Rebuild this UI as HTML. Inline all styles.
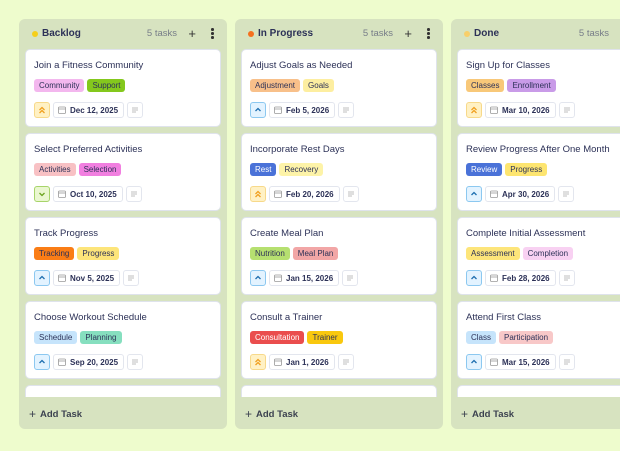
<!DOCTYPE html>
<html><head><meta charset="utf-8"><style>
*{box-sizing:border-box;margin:0;padding:0}
body{width:620px;height:451px;overflow:hidden;background:#eefccd;font-family:"Liberation Sans",sans-serif;color:#2c3157;position:relative}
.col{position:absolute;top:19px;width:208px;height:410px;background:#d7e3c0;border-radius:6px;overflow:hidden}
.hd{position:absolute;top:0;left:0;right:0;height:30px}
.dot{position:absolute;left:13px;top:12px;width:6px;height:6px;border-radius:50%}
.ht{position:absolute;left:23px;top:9px;font-size:10px;font-weight:bold}
.cnt{position:absolute;right:50px;top:9px;font-size:9.5px;color:#777d88}
.plus{position:absolute;right:31px;top:7px;font-size:13px;color:#333}
.more{position:absolute;right:13px;top:9px;width:3px}
.more i{display:block;width:2.5px;height:2.5px;background:#333;border-radius:50%;margin-bottom:1.5px}
.list{position:absolute;top:30px;left:6px;width:196px;height:348px;overflow:hidden}
.card{position:absolute;left:0;width:196px;height:78px;background:#fff;border-radius:5px;border:1px solid #dfe3ec}
.tt{position:absolute;left:8px;top:10px;font-size:9.5px;white-space:nowrap}
.tags{position:absolute;left:8px;top:29px;display:flex;gap:3px}
.tag{font-size:8px;height:13px;line-height:13px;padding:0 5px;border-radius:3px;color:#2c3157}
.ft{position:absolute;left:8px;top:52px;display:flex;gap:3px}
.pr{width:16px;height:16px;border-radius:3px;display:flex;align-items:center;justify-content:center}
.hi{background:#fff1c4;border:1px solid #f7d98a}
.lo{background:#e3f3ff;border:1px solid #8cc8f0}
.dn{background:#eaf7d0;border:1px solid #a7d46a}
.dt{height:16px;border:1px solid #e3e6ee;border-radius:3px;font-size:8px;font-weight:bold;display:flex;align-items:center;padding:0 5px 0 4px;gap:4px}
.nt{width:16px;height:16px;border:1px solid #e3e6ee;border-radius:3px;display:flex;align-items:center;justify-content:center}
.add{position:absolute;left:10px;top:387px;font-size:9.5px;font-weight:bold;color:#3c4250}
.add b{font-size:12px;font-weight:normal;margin-right:4px;position:relative;top:1px}
</style></head><body>

<div class="col" style="left:19px">
 <div class="hd"><div class="dot" style="background:#f5cf1a"></div><div class="ht">Backlog</div><div class="cnt">5 tasks</div><div class="plus">+</div><div class="more"><i></i><i></i><i></i></div></div>
 <div class="list">
  <div class="card" style="top:0">
   <div class="tt">Join a Fitness Community</div>
   <div class="tags"><span class="tag" style="background:#f3b7ee">Community</span><span class="tag" style="background:#84c81d">Support</span></div>
   <div class="ft"><div class="pr hi"><svg width="8" height="8" viewBox="0 0 8 8" fill="none" stroke="#f0a020" stroke-width="1.3"><path d="M1.5 4 4 1.5 6.5 4M1.5 7 4 4.5 6.5 7"/></svg></div><div class="dt"><svg width="8" height="8" viewBox="0 0 8 8" fill="none" stroke="#999" stroke-width=".8"><rect x=".5" y="1" width="7" height="6.5" rx="1"/><path d="M.5 3h7"/></svg>Dec 12, 2025</div><div class="nt"><svg width="8" height="6" viewBox="0 0 8 6" stroke="#aaa" stroke-width=".8"><path d="M1 1h6M1 3h6M1 5h4"/></svg></div></div>
  </div>
  <div class="card" style="top:84px">
   <div class="tt">Select Preferred Activities</div>
   <div class="tags"><span class="tag" style="background:#f8c1c4">Activities</span><span class="tag" style="background:#f17fe0">Selection</span></div>
   <div class="ft"><div class="pr dn"><svg width="8" height="8" viewBox="0 0 8 8" fill="none" stroke="#6aa31d" stroke-width="1.3"><path d="M1.5 3 4 5.5 6.5 3"/></svg></div><div class="dt"><svg width="8" height="8" viewBox="0 0 8 8" fill="none" stroke="#999" stroke-width=".8"><rect x=".5" y="1" width="7" height="6.5" rx="1"/><path d="M.5 3h7"/></svg>Oct 10, 2025</div><div class="nt"><svg width="8" height="6" viewBox="0 0 8 6" stroke="#aaa" stroke-width=".8"><path d="M1 1h6M1 3h6M1 5h4"/></svg></div></div>
  </div>
  <div class="card" style="top:168px">
   <div class="tt">Track Progress</div>
   <div class="tags"><span class="tag" style="background:#fa7d16">Tracking</span><span class="tag" style="background:#fde57a">Progress</span></div>
   <div class="ft"><div class="pr lo"><svg width="8" height="8" viewBox="0 0 8 8" fill="none" stroke="#1f6fb0" stroke-width="1.3"><path d="M1.5 5 4 2.5 6.5 5"/></svg></div><div class="dt"><svg width="8" height="8" viewBox="0 0 8 8" fill="none" stroke="#999" stroke-width=".8"><rect x=".5" y="1" width="7" height="6.5" rx="1"/><path d="M.5 3h7"/></svg>Nov 5, 2025</div><div class="nt"><svg width="8" height="6" viewBox="0 0 8 6" stroke="#aaa" stroke-width=".8"><path d="M1 1h6M1 3h6M1 5h4"/></svg></div></div>
  </div>
  <div class="card" style="top:252px">
   <div class="tt">Choose Workout Schedule</div>
   <div class="tags"><span class="tag" style="background:#c6e4fb">Schedule</span><span class="tag" style="background:#86dfbf">Planning</span></div>
   <div class="ft"><div class="pr lo"><svg width="8" height="8" viewBox="0 0 8 8" fill="none" stroke="#1f6fb0" stroke-width="1.3"><path d="M1.5 5 4 2.5 6.5 5"/></svg></div><div class="dt"><svg width="8" height="8" viewBox="0 0 8 8" fill="none" stroke="#999" stroke-width=".8"><rect x=".5" y="1" width="7" height="6.5" rx="1"/><path d="M.5 3h7"/></svg>Sep 20, 2025</div><div class="nt"><svg width="8" height="6" viewBox="0 0 8 6" stroke="#aaa" stroke-width=".8"><path d="M1 1h6M1 3h6M1 5h4"/></svg></div></div>
  </div>
  <div class="card" style="top:336px"></div>
 </div>
 <div class="add"><b>+</b>Add Task</div>
</div>

<div class="col" style="left:235px">
 <div class="hd"><div class="dot" style="background:#f5701e"></div><div class="ht">In Progress</div><div class="cnt">5 tasks</div><div class="plus">+</div><div class="more"><i></i><i></i><i></i></div></div>
 <div class="list">
  <div class="card" style="top:0">
   <div class="tt">Adjust Goals as Needed</div>
   <div class="tags"><span class="tag" style="background:#f8c08a">Adjustment</span><span class="tag" style="background:#fdeea0">Goals</span></div>
   <div class="ft"><div class="pr lo"><svg width="8" height="8" viewBox="0 0 8 8" fill="none" stroke="#1f6fb0" stroke-width="1.3"><path d="M1.5 5 4 2.5 6.5 5"/></svg></div><div class="dt"><svg width="8" height="8" viewBox="0 0 8 8" fill="none" stroke="#999" stroke-width=".8"><rect x=".5" y="1" width="7" height="6.5" rx="1"/><path d="M.5 3h7"/></svg>Feb 5, 2026</div><div class="nt"><svg width="8" height="6" viewBox="0 0 8 6" stroke="#aaa" stroke-width=".8"><path d="M1 1h6M1 3h6M1 5h4"/></svg></div></div>
  </div>
  <div class="card" style="top:84px">
   <div class="tt">Incorporate Rest Days</div>
   <div class="tags"><span class="tag" style="background:#4a72d8;color:#fff">Rest</span><span class="tag" style="background:#fdf3a8">Recovery</span></div>
   <div class="ft"><div class="pr hi"><svg width="8" height="8" viewBox="0 0 8 8" fill="none" stroke="#f0a020" stroke-width="1.3"><path d="M1.5 4 4 1.5 6.5 4M1.5 7 4 4.5 6.5 7"/></svg></div><div class="dt"><svg width="8" height="8" viewBox="0 0 8 8" fill="none" stroke="#999" stroke-width=".8"><rect x=".5" y="1" width="7" height="6.5" rx="1"/><path d="M.5 3h7"/></svg>Feb 20, 2026</div><div class="nt"><svg width="8" height="6" viewBox="0 0 8 6" stroke="#aaa" stroke-width=".8"><path d="M1 1h6M1 3h6M1 5h4"/></svg></div></div>
  </div>
  <div class="card" style="top:168px">
   <div class="tt">Create Meal Plan</div>
   <div class="tags"><span class="tag" style="background:#b6e070">Nutrition</span><span class="tag" style="background:#f2a6a6">Meal Plan</span></div>
   <div class="ft"><div class="pr lo"><svg width="8" height="8" viewBox="0 0 8 8" fill="none" stroke="#1f6fb0" stroke-width="1.3"><path d="M1.5 5 4 2.5 6.5 5"/></svg></div><div class="dt"><svg width="8" height="8" viewBox="0 0 8 8" fill="none" stroke="#999" stroke-width=".8"><rect x=".5" y="1" width="7" height="6.5" rx="1"/><path d="M.5 3h7"/></svg>Jan 15, 2026</div><div class="nt"><svg width="8" height="6" viewBox="0 0 8 6" stroke="#aaa" stroke-width=".8"><path d="M1 1h6M1 3h6M1 5h4"/></svg></div></div>
  </div>
  <div class="card" style="top:252px">
   <div class="tt">Consult a Trainer</div>
   <div class="tags"><span class="tag" style="background:#ea4d4d;color:#fff">Consultation</span><span class="tag" style="background:#f9c80e">Trainer</span></div>
   <div class="ft"><div class="pr hi"><svg width="8" height="8" viewBox="0 0 8 8" fill="none" stroke="#f0a020" stroke-width="1.3"><path d="M1.5 4 4 1.5 6.5 4M1.5 7 4 4.5 6.5 7"/></svg></div><div class="dt"><svg width="8" height="8" viewBox="0 0 8 8" fill="none" stroke="#999" stroke-width=".8"><rect x=".5" y="1" width="7" height="6.5" rx="1"/><path d="M.5 3h7"/></svg>Jan 1, 2026</div><div class="nt"><svg width="8" height="6" viewBox="0 0 8 6" stroke="#aaa" stroke-width=".8"><path d="M1 1h6M1 3h6M1 5h4"/></svg></div></div>
  </div>
  <div class="card" style="top:336px"></div>
 </div>
 <div class="add"><b>+</b>Add Task</div>
</div>

<div class="col" style="left:451px">
 <div class="hd"><div class="dot" style="background:#f8cf6a"></div><div class="ht">Done</div><div class="cnt">5 tasks</div><div class="plus">+</div><div class="more"><i></i><i></i><i></i></div></div>
 <div class="list">
  <div class="card" style="top:0">
   <div class="tt">Sign Up for Classes</div>
   <div class="tags"><span class="tag" style="background:#f8c879">Classes</span><span class="tag" style="background:#c99be8">Enrollment</span></div>
   <div class="ft"><div class="pr hi"><svg width="8" height="8" viewBox="0 0 8 8" fill="none" stroke="#f0a020" stroke-width="1.3"><path d="M1.5 4 4 1.5 6.5 4M1.5 7 4 4.5 6.5 7"/></svg></div><div class="dt"><svg width="8" height="8" viewBox="0 0 8 8" fill="none" stroke="#999" stroke-width=".8"><rect x=".5" y="1" width="7" height="6.5" rx="1"/><path d="M.5 3h7"/></svg>Mar 10, 2026</div><div class="nt"><svg width="8" height="6" viewBox="0 0 8 6" stroke="#aaa" stroke-width=".8"><path d="M1 1h6M1 3h6M1 5h4"/></svg></div></div>
  </div>
  <div class="card" style="top:84px">
   <div class="tt">Review Progress After One Month</div>
   <div class="tags"><span class="tag" style="background:#4a72d8;color:#fff">Review</span><span class="tag" style="background:#fde570">Progress</span></div>
   <div class="ft"><div class="pr lo"><svg width="8" height="8" viewBox="0 0 8 8" fill="none" stroke="#1f6fb0" stroke-width="1.3"><path d="M1.5 5 4 2.5 6.5 5"/></svg></div><div class="dt"><svg width="8" height="8" viewBox="0 0 8 8" fill="none" stroke="#999" stroke-width=".8"><rect x=".5" y="1" width="7" height="6.5" rx="1"/><path d="M.5 3h7"/></svg>Apr 30, 2026</div><div class="nt"><svg width="8" height="6" viewBox="0 0 8 6" stroke="#aaa" stroke-width=".8"><path d="M1 1h6M1 3h6M1 5h4"/></svg></div></div>
  </div>
  <div class="card" style="top:168px">
   <div class="tt">Complete Initial Assessment</div>
   <div class="tags"><span class="tag" style="background:#fde57a">Assessment</span><span class="tag" style="background:#f8d1f2">Completion</span></div>
   <div class="ft"><div class="pr lo"><svg width="8" height="8" viewBox="0 0 8 8" fill="none" stroke="#1f6fb0" stroke-width="1.3"><path d="M1.5 5 4 2.5 6.5 5"/></svg></div><div class="dt"><svg width="8" height="8" viewBox="0 0 8 8" fill="none" stroke="#999" stroke-width=".8"><rect x=".5" y="1" width="7" height="6.5" rx="1"/><path d="M.5 3h7"/></svg>Feb 28, 2026</div><div class="nt"><svg width="8" height="6" viewBox="0 0 8 6" stroke="#aaa" stroke-width=".8"><path d="M1 1h6M1 3h6M1 5h4"/></svg></div></div>
  </div>
  <div class="card" style="top:252px">
   <div class="tt">Attend First Class</div>
   <div class="tags"><span class="tag" style="background:#c6e4fb">Class</span><span class="tag" style="background:#f8c8c8">Participation</span></div>
   <div class="ft"><div class="pr lo"><svg width="8" height="8" viewBox="0 0 8 8" fill="none" stroke="#1f6fb0" stroke-width="1.3"><path d="M1.5 5 4 2.5 6.5 5"/></svg></div><div class="dt"><svg width="8" height="8" viewBox="0 0 8 8" fill="none" stroke="#999" stroke-width=".8"><rect x=".5" y="1" width="7" height="6.5" rx="1"/><path d="M.5 3h7"/></svg>Mar 15, 2026</div><div class="nt"><svg width="8" height="6" viewBox="0 0 8 6" stroke="#aaa" stroke-width=".8"><path d="M1 1h6M1 3h6M1 5h4"/></svg></div></div>
  </div>
  <div class="card" style="top:336px"></div>
 </div>
 <div class="add"><b>+</b>Add Task</div>
</div>
</body></html>
